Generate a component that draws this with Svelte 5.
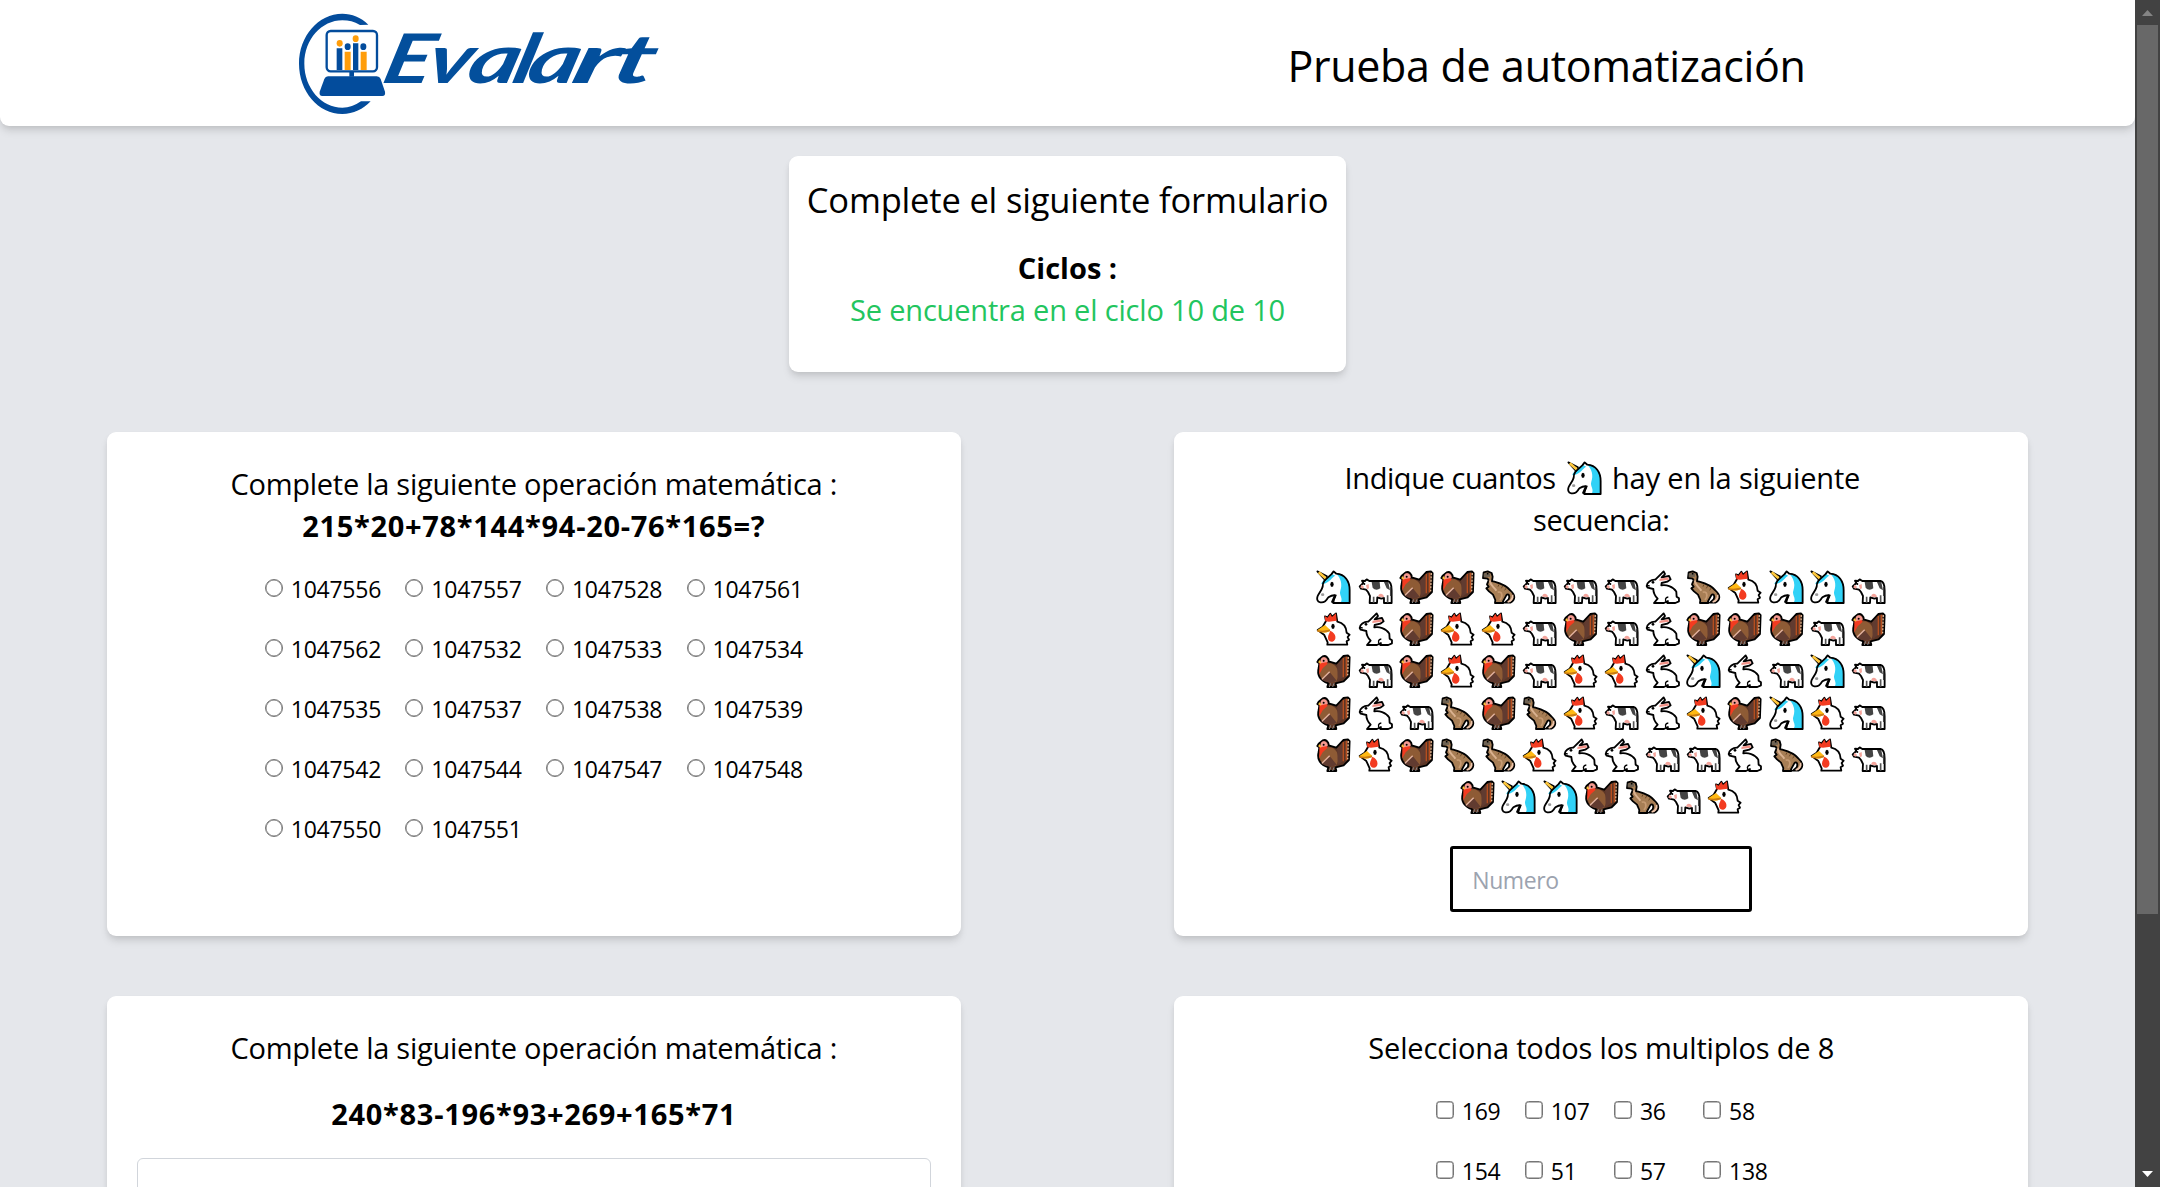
<script>
  const answers = [
    1047556, 1047557, 1047528, 1047561, 1047562, 1047532, 1047533, 1047534, 1047535,
    1047537, 1047538, 1047539, 1047542, 1047544, 1047547, 1047548, 1047550, 1047551
  ];
  const multiples = [169, 107, 36, 58, 154, 51, 57, 138];

  const names = { U: 'unicorn', C: 'cow', T: 'turkey', D: 'trex', R: 'rabbit', K: 'rooster' };
  const sequence = [
    'UCTTDCCCRDKUUC',
    'KRTKKCTCRTTTCT',
    'TCTKTCKKRURCUC',
    'TRCDTDKCRKTUKC',
    'TKTDDKRRCCRDKC',
    'TUUTDCK'
  ];
</script>

{#snippet animal(name)}
  <svg class="animal" viewBox="0 0 106 104" aria-hidden="true">
    {#if name === 'unicorn'}
      <path d="M26 31 46 13 53 4 61 11C87 13 101 33 101 60V99H52C52 90 55 84 59 76 46 74 41 80 36 83 31 93 24 99 13 97 3 95 2 86 5 78 9 69 17 61 20 50 20 42 22 37 26 31Z" fill="#fff" />
      <path d="M61 11C87 13 101 33 101 60V99H73C84 86 68 76 73 62 80 42 74 24 61 11ZM16 41C20 30 34 26 46 11L58 17C46 22 46 36 18 43Z" fill="#31d2f7" />
      <path d="M26 31 46 13 53 4 61 11C87 13 101 33 101 60V99H52C52 90 55 84 59 76 46 74 41 80 36 83 31 93 24 99 13 97 3 95 2 86 5 78 9 69 17 61 20 50 20 42 22 37 26 31Z" fill="none" stroke="#000" stroke-width="5.5" stroke-linejoin="round" />
      <path d="M58 75 48 98" stroke="#000" stroke-width="7" />
      <path d="M4 4 33 19 27 30Z" fill="#ffc83d" stroke="#000" stroke-width="5" stroke-linejoin="round" />
      <path d="M8 7 29 25" stroke="#ffc83d" stroke-width="8" />
      <ellipse cx="48" cy="43" rx="5" ry="8" />
      <ellipse cx="20" cy="74" rx="5" ry="4" fill="#999" />
    {:else if name === 'cow'}
      <path d="M5 49 16 39 12 32 21 33 26 28 34 33 89 33C99 35 101 45 101 61V99H78L78 84 70 86 58 82 57 99H35L36 78 30 66 24 59 9 56Z" fill="#fff" stroke="#000" stroke-width="5.5" stroke-linejoin="round" />
      <path d="M41 36H65L67 55C58 62 49 59 44 53ZM78 36H91L96 61 86 55Z" fill="#444" />
      <path d="M10 44 18 50 15 56 7 53ZM24 46 32 42 33 55 27 58ZM61 80C60 68 78 68 78 82Z" fill="#f4a49b" />
      <path d="M98 51V78" stroke="#444" stroke-width="4" />
      <path d="M47 80V98M89 76V98" stroke="#555" stroke-width="5" />
      <circle cx="19" cy="42" r="3" />
    {:else if name === 'turkey'}
      <path d="M20 7C30 3 39 12 38 22L61 29 82 6 96 4 101 9 99 66 83 82 59 88 61 99H34L37 88C9 79 3 60 8 42L10 28 4 24 8 17Z" fill="#5b3525" stroke="#000" stroke-width="5.5" stroke-linejoin="round" />
      <path d="M37 28C59 25 78 56 60 84 29 90 10 72 9 51L28 31Z" fill="#8e5b35" />
      <path d="M41 54 62 80C48 90 24 84 16 76ZM64 31 80 13 81 70 65 81Z" fill="#613b30" />
      <path d="M82 12V70M91 8V67" stroke="#b9501f" stroke-width="4" />
      <path d="M97 9 95 64" stroke="#e0b48e" stroke-width="4" stroke-dasharray="6 4" />
      <path d="M10 25 29 18 35 29 20 43 10 61Z" fill="#f33b20" />
      <path d="M15 15C20 4 36 10 35 24L13 28Z" fill="#f59a91" />
      <path d="M12 18 16 29 6 25Z" fill="#ffc83d" />
      <circle cx="23" cy="20" r="3" />
      <path d="M18 76 41 53" stroke="#e5b5a0" stroke-width="4" />
      <path d="M44 88 40 99M54 88 50 99" stroke="#888" stroke-width="3" />
    {:else if name === 'trex'}
      <path d="M8 7 20 4 32 9 35 20 33 33C50 38 73 42 88 61 104 75 104 89 88 98H72L83 88C88 78 82 68 76 76L66 94 67 99H42L43 90 36 74 24 64 16 55 23 50 18 43 23 31 20 26 6 24Z" fill="#a77e55" stroke="#000" stroke-width="5.5" stroke-linejoin="round" />
      <path d="M8 11 20 8 28 12 27 20 8 22Z" fill="#6e6253" />
      <path d="M26 31C27 47 39 50 46 62" fill="none" stroke="#d9b18f" stroke-width="6" />
      <path d="M54 43 51 50M65 48 61 55M76 54 71 61" stroke="#674626" stroke-width="3" />
      <path d="M50 67C63 62 67 77 57 90" fill="none" stroke="#c79b73" stroke-width="5" />
      <path d="M95 75C97 86 89 94 80 96" fill="none" stroke="#efc6ad" stroke-width="5" />
      <circle cx="20" cy="11" r="2.5" />
    {:else if name === 'rabbit'}
      <path d="M5 48C5 38 18 28 31 29L47 13 56 4 60 12 50 22 72 18 77 28 67 35 50 39 49 46C62 44 84 47 94 65L95 80 102 85V94L91 99H67L69 93 57 99H27L38 86C30 78 25 70 25 57L8 53Z" fill="#fff" stroke="#000" stroke-width="5.5" stroke-linejoin="round" />
      <path d="M44 26 70 22 72 29 43 33Z" fill="#f39389" />
      <circle cx="24" cy="37" r="4" />
      <path d="M6 46 14 48M66 98C58 90 61 82 70 81" fill="none" stroke="#000" stroke-width="4" />
    {:else}
      <path d="M30 27 27 13 35 16 43 5 48 14 60 4 64 29C83 33 91 46 92 62L101 68 95 75 99 83 92 88 94 98H34L35 91 25 69 5 54 20 44Z" fill="#fff" stroke="#000" stroke-width="5.5" stroke-linejoin="round" />
      <path d="M28 28 26 12 35 17 43 5 48 15 60 4 62 26 39 29Z" fill="#f33b20" />
      <path d="M3 55 27 39 43 54C34 65 18 65 3 55Z" fill="#ffb914" />
      <path d="M4 56C17 61 31 58 42 55" fill="none" stroke="#c97b13" stroke-width="5" />
      <path d="M43 56C62 64 63 85 49 89 36 90 33 77 39 66Z" fill="#f33b20" />
      <ellipse cx="51" cy="43" rx="5" ry="8" />
    {/if}
  </svg>
{/snippet}

<div class="window">
  <div class="page">
    <header>
      <svg class="logo" viewBox="0 0 1200 378" role="img" aria-label="Evalart">
        <g fill="#034c9c">
          <path d="M265 74C242 51 216 41 187 41C115 41 57 108 57 191C57 274 115 342 187 342C220 342 250 328 272 304H243C225 317 207 323 187 323C125 323 73 264 73 191C73 118 125 61 187 61C207 61 222 65 240 75Z" />
          <path d="M208 215H222V230H208Z" />
          <path d="M144 229H290Q299 229 302 237L315 275Q317 288 307 288H127Q117 288 119 275L133 237Q136 229 144 229Z" />
          <path d="M170 145H187V210H170ZM219 130H235V210H219Z" />
          <ellipse cx="203" cy="140" rx="9" ry="10" />
          <ellipse cx="250" cy="140" rx="9" ry="10" />
        </g>
        <rect x="140" y="93" width="151" height="121" rx="12" fill="none" stroke="#034c9c" stroke-width="7" />
        <g fill="#ff9d0a">
          <path d="M194 155H212V210H194ZM242 155H260V210H242Z" />
          <ellipse cx="179" cy="130" rx="9" ry="10" />
          <ellipse cx="227" cy="116" rx="9" ry="10" />
        </g>
        <g transform="translate(300 249) skewX(-14) scale(1.32 1)">
          <text class="wordmark" y="0"><tspan x="0">E</tspan><tspan x="100">v</tspan><tspan x="193" textLength="116" lengthAdjust="spacingAndGlyphs">a</tspan><tspan x="296">l</tspan><tspan x="329" textLength="116" lengthAdjust="spacingAndGlyphs">a</tspan><tspan x="430" textLength="104" lengthAdjust="spacingAndGlyphs">r</tspan><tspan x="522" textLength="94" lengthAdjust="spacingAndGlyphs">t</tspan></text>
        </g>
      </svg>
      <h1>Prueba de automatización</h1>
    </header>

    <section class="card intro">
      <h2>Complete el siguiente formulario</h2>
      <p class="cycles">Ciclos :</p>
      <p class="status">Se encuentra en el ciclo 10 de 10</p>
    </section>

    <main>
      <section class="card">
        <p class="question math">Complete la siguiente operación matemática :</p>
        <p class="formula">215*20+78*144*94-20-76*165=?</p>
        <div class="radios">
          {#each answers as answer}
            <label><input type="radio" name="answer" value={answer} /><span>{answer}</span></label>
          {/each}
        </div>
      </section>

      <section class="card count">
        <p class="question ask"><span class="lead">Indique cuantos</span>{@render animal('unicorn')}<span class="tail">hay en la siguiente</span></p>
        <p class="question second">secuencia:</p>
        <div class="sequence">
          {#each sequence as row}
            <div class="animals">
              {#each row.split('') as key}
                {@render animal(names[key])}
              {/each}
            </div>
          {/each}
        </div>
        <input class="number" type="text" placeholder="Numero" />
      </section>

      <section class="card">
        <p class="question math">Complete la siguiente operación matemática :</p>
        <p class="formula spaced">240*83-196*93+269+165*71</p>
        <textarea aria-label="Respuesta"></textarea>
      </section>

      <section class="card">
        <p class="question">Selecciona todos los multiplos de 8</p>
        <div class="checks">
          {#each multiples as value}
            <label><input type="checkbox" {value} /><span>{value}</span></label>
          {/each}
        </div>
      </section>
    </main>
  </div>

  <div class="scrollbar">
    <svg class="arrow" viewBox="0 0 11 6"><path d="M0 6 5.5 0 11 6Z" fill="#848484" /></svg>
    <div class="thumb"></div>
    <svg class="arrow down" viewBox="0 0 11 6"><path d="M0 0H11L5.5 6Z" fill="#fff" /></svg>
  </div>
</div>

<style>
  :global(body) {
    margin: 0;
    overflow: hidden;
  }

  .window {
    display: flex;
    width: 2160px;
    height: 1187px;
    overflow: hidden;
    font-family: 'Open Sans', 'Noto Sans', sans-serif;
    color: #000;
  }

  .window * {
    box-sizing: border-box;
  }

  h1,
  h2,
  p {
    margin: 0;
    font-weight: 400;
    white-space: nowrap;
  }

  .page {
    width: 2135px;
    height: 1187px;
    overflow: hidden;
    background: #e5e7eb;
  }

  header {
    display: flex;
    height: 126px;
    padding-left: 280px;
    background: #fff;
    border-radius: 0 0 9px 9px;
    box-shadow: 0 6px 9px -1px rgb(0 0 0 / 0.1), 0 3px 6px -2px rgb(0 0 0 / 0.1);
  }

  .logo {
    width: 400px;
    height: 126px;
  }

  .wordmark {
    font: italic 700 205px Lato, sans-serif;
    fill: #034f9c;
  }

  h1 {
    width: 557px;
    margin-left: 588px;
    padding-top: 36px;
    font-size: 43px;
    line-height: 60px;
    letter-spacing: -0.33px;
    text-align: center;
  }

  .card {
    height: 504px;
    padding-top: 31px;
    background: #fff;
    border-radius: 9px;
    box-shadow: 0 6px 9px -1px rgb(0 0 0 / 0.1), 0 3px 6px -2px rgb(0 0 0 / 0.1);
    text-align: center;
  }

  .intro {
    width: 557px;
    height: 216px;
    margin: 30px auto 60px;
    padding-top: 20px;
  }

  h2 {
    font-size: 34.5px;
    line-height: 48px;
    letter-spacing: -0.18px;
  }

  .cycles,
  .status {
    font-size: 29px;
    line-height: 42px;
  }

  .cycles {
    margin-top: 23px;
    font-weight: 700;
  }

  .status {
    color: #22c55e;
    letter-spacing: -0.18px;
  }

  main {
    display: grid;
    grid-template-columns: 854px 854px;
    gap: 60px 213.5px;
    justify-content: center;
  }

  .question,
  .formula {
    font-size: 29px;
    line-height: 42px;
  }

  .question {
    letter-spacing: -0.17px;
  }

  .math {
    letter-spacing: -0.26px;
  }

  .formula {
    font-weight: 700;
    letter-spacing: 0.69px;
  }

  .spaced {
    margin-top: 24px;
  }

  .radios {
    display: grid;
    grid-template-columns: repeat(4, 140.6px);
    width: 562.4px;
    margin: 24px auto 0 158px;
  }

  label {
    display: flex;
    align-items: center;
    height: 36px;
    margin-bottom: 24px;
    font-size: 23px;
    line-height: 36px;
    letter-spacing: -0.25px;
  }

  label input {
    appearance: none;
    flex: none;
    width: 18px;
    height: 18px;
    margin: 0 8px 2px 0;
    border: 1px solid #767676;
    border-radius: 3.5px;
    background: #fff;
    box-shadow: inset 0 0 0 0.5px #767676;
  }

  .radios input {
    border-radius: 50%;
  }

  .count {
    padding-top: 25px;
  }

  .ask {
    display: flex;
    justify-content: center;
    align-items: center;
  }

  .lead {
    width: 210px;
    letter-spacing: -0.42px;
  }

  .tail {
    width: 246px;
    letter-spacing: -0.15px;
  }

  .second {
    letter-spacing: -0.45px;
  }

  .animal {
    display: block;
    flex: none;
    width: 35.3px;
    height: 34.7px;
  }

  .ask .animal {
    margin: 0 10px 0 12px;
  }

  .sequence {
    margin-top: 29px;
  }

  .animals {
    display: flex;
    justify-content: center;
    gap: 5.8px;
    height: 42px;
  }

  .number {
    display: block;
    width: 302px;
    height: 66px;
    margin: 24px auto 0;
    padding: 1px 19px 0;
    border: 3px solid #000;
    border-radius: 3px;
    outline: none;
    font: 400 23px 'Open Sans', sans-serif;
    letter-spacing: -0.4px;
  }

  .number::placeholder {
    color: #9ca3af;
    opacity: 1;
  }

  textarea {
    display: block;
    width: 794px;
    height: 180px;
    margin: 23px auto 0;
    border: 1px solid #d1d5db;
    border-radius: 6px;
    resize: none;
  }

  .checks {
    display: grid;
    grid-template-columns: repeat(4, 89.1px);
    margin: 24px 0 0 261.5px;
  }

  .scrollbar {
    display: flex;
    flex-direction: column;
    align-items: center;
    width: 25px;
    height: 1187px;
    padding: 10px 0;
    background: #424242;
  }

  .arrow {
    width: 11px;
    height: 6px;
  }

  .thumb {
    width: 21px;
    height: 889px;
    margin-top: 9px;
    background: #686868;
  }

  .down {
    margin-top: auto;
  }
</style>
